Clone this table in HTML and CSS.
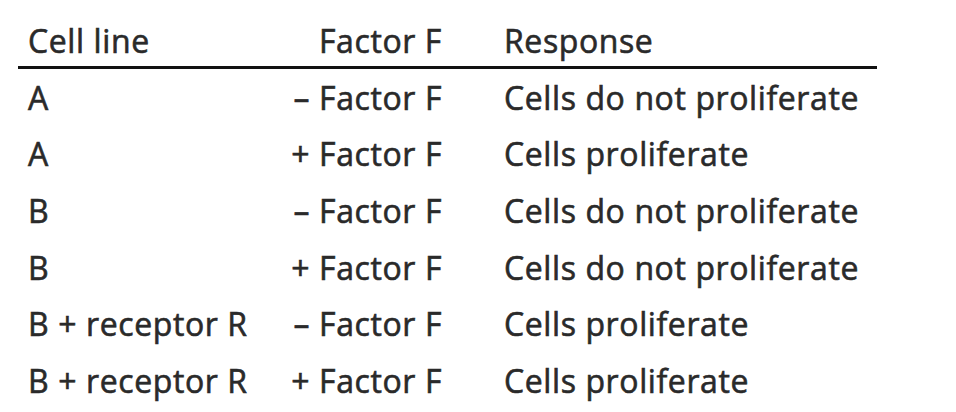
FILE: index.html
```html
<!DOCTYPE html>
<html>
<head>
<meta charset="utf-8">
<link rel="stylesheet" href="styles.css">
</head>
<body>
<div class="wrap">
<table class="data">
<thead>
<tr><th class="c1">Cell line</th><th class="c2">Factor F</th><th class="c3">Response</th></tr>
</thead>
<tbody>
<tr><td class="c1">A</td><td class="c2">– Factor F</td><td class="c3">Cells do not proliferate</td></tr>
<tr><td class="c1">A</td><td class="c2">+ Factor F</td><td class="c3">Cells proliferate</td></tr>
<tr><td class="c1">B</td><td class="c2">– Factor F</td><td class="c3">Cells do not proliferate</td></tr>
<tr><td class="c1">B</td><td class="c2">+ Factor F</td><td class="c3">Cells do not proliferate</td></tr>
<tr><td class="c1">B + receptor R</td><td class="c2">– Factor F</td><td class="c3">Cells proliferate</td></tr>
<tr><td class="c1">B + receptor R</td><td class="c2">+ Factor F</td><td class="c3">Cells proliferate</td></tr>
</tbody>
</table>
</div>
</body>
</html>
```
FILE: styles.css
```css
html, body {
  margin: 0;
  padding: 0;
  background: #ffffff;
}
.wrap {
  padding: 14px 0 0 18px;
}
.data {
  border-collapse: collapse;
  width: 859px;
  font-family: "Open Sans", "Noto Sans", sans-serif;
  font-size: 32px;
  font-weight: 400;
  letter-spacing: 0.6px;
  -webkit-text-stroke: 0.6px #2a2a2a;
  color: #2a2a2a;
}
.data th, .data td {
  padding: 0;
  height: 56.6px;
  font-weight: 400;
  vertical-align: middle;
  white-space: nowrap;
}
.data thead th {
  border-bottom: 3px solid #111;
  height: 52px;
}
.c1 {
  text-align: left;
  padding-left: 10px !important;
  width: 262px;
}
.c2 {
  text-align: right;
  width: 152px;
}
.c3 {
  text-align: left;
  padding-left: 62px !important;
}
```
